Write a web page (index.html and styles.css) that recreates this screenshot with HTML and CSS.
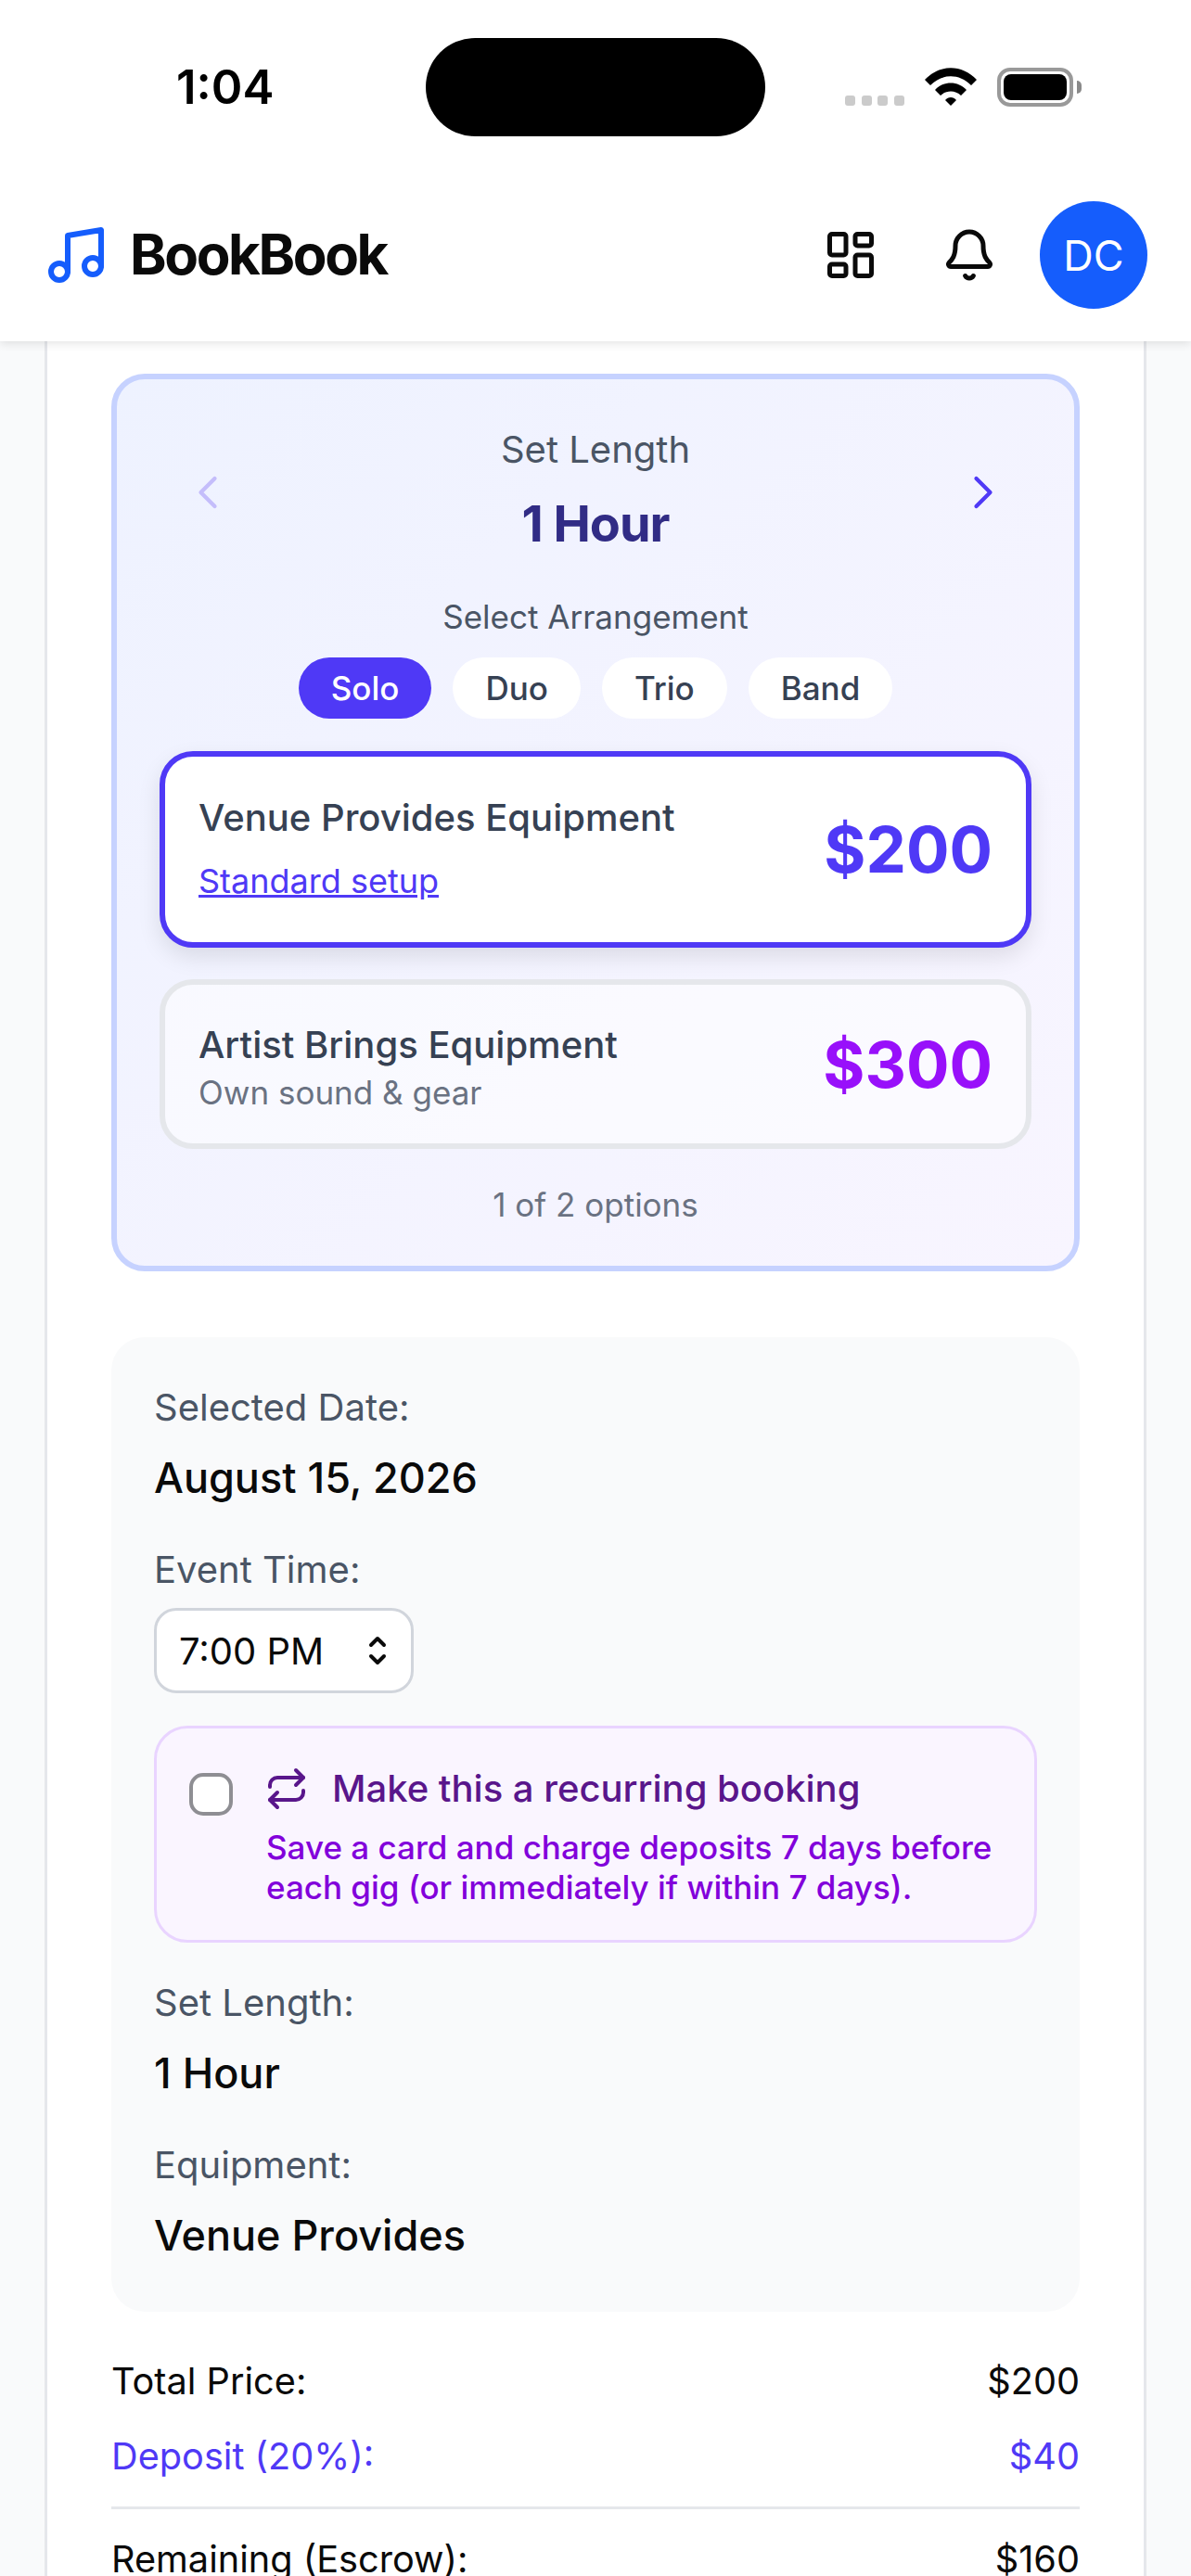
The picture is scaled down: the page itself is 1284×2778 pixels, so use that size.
FILE: index.html
```html
<!DOCTYPE html>
<html lang="en">
<head>
  <meta charset="UTF-8">
  <title>BookBook</title>
  <link rel="stylesheet" href="styles.css">
</head>
<body>

  <div class="top">
    <div class="status">
      <span class="clock">1:04</span>
      <div class="island"></div>
      <div class="status-icons">
        <div class="signal"><i></i><i></i><i></i><i></i></div>
        <svg class="wifi" width="56" height="41" viewBox="0 0 56 41" fill="#000">
          <path d="M0 13C16-4 40-4 56 13L50 19C37 6 19 6 6 19Z"/>
          <path d="M11 24C20 14 36 14 45 24L39 30C33 24 23 24 17 30Z"/>
          <path d="M22 35C25 31 31 31 34 35L28 41Z"/>
        </svg>
        <div class="battery"><div class="battery-fill"></div></div>
        <div class="battery-nub"></div>
      </div>
    </div>

    <header class="header">
      <div class="logo">
        <svg width="72" height="72" viewBox="0 0 24 24" fill="none" stroke="#155dfc" stroke-width="2" stroke-linecap="round" stroke-linejoin="round">
          <path d="M9 18V5l12-2v13"/>
          <circle cx="6" cy="18" r="3"/>
          <circle cx="18" cy="16" r="3"/>
        </svg>
        <span class="logo-text">BookBook</span>
      </div>
      <div class="header-actions">
        <svg class="icon-grid" width="60" height="60" viewBox="0 0 24 24" fill="none" stroke="#0a0a0a" stroke-width="2" stroke-linecap="round" stroke-linejoin="round">
          <rect x="3" y="3" width="7" height="9" rx="1"/>
          <rect x="14" y="3" width="7" height="5" rx="1"/>
          <rect x="14" y="12" width="7" height="9" rx="1"/>
          <rect x="3" y="16" width="7" height="5" rx="1"/>
        </svg>
        <svg class="icon-bell" width="60" height="60" viewBox="0 0 24 24" fill="none" stroke="#0a0a0a" stroke-width="2" stroke-linecap="round" stroke-linejoin="round">
          <path d="M10.268 21a2 2 0 0 0 3.464 0"/>
          <path d="M3.262 15.326A1 1 0 0 0 4 17h16a1 1 0 0 0 .74-1.673C19.41 13.956 18 12.499 18 8A6 6 0 0 0 6 8c0 4.499-1.411 5.956-2.738 7.326"/>
        </svg>
        <div class="avatar">DC</div>
      </div>
    </header>
  </div>

  <main class="page">
    <div class="card">

      <section class="picker">
        <div class="length-row">
          <svg class="chevron chevron-off" width="60" height="60" viewBox="0 0 24 24" fill="none" stroke="currentColor" stroke-width="1.7" stroke-linecap="round" stroke-linejoin="round"><path d="m15 18-6-6 6-6"/></svg>
          <div class="length-text">
            <div class="length-label">Set Length</div>
            <div class="length-value">1 Hour</div>
          </div>
          <svg class="chevron" width="60" height="60" viewBox="0 0 24 24" fill="none" stroke="currentColor" stroke-width="1.7" stroke-linecap="round" stroke-linejoin="round"><path d="m9 18 6-6-6-6"/></svg>
        </div>

        <div class="arrange-label">Select Arrangement</div>
        <div class="pills">
          <span class="pill pill-on">Solo</span>
          <span class="pill">Duo</span>
          <span class="pill">Trio</span>
          <span class="pill">Band</span>
        </div>

        <div class="option option-on">
          <div class="option-info">
            <div class="option-title">Venue Provides Equipment</div>
            <a class="option-link">Standard setup</a>
          </div>
          <div class="price price-indigo">$200</div>
        </div>

        <div class="option option-off">
          <div>
            <div class="option-title">Artist Brings Equipment</div>
            <div class="option-sub">Own sound &amp; gear</div>
          </div>
          <div class="price price-purple">$300</div>
        </div>

        <div class="count">1 of 2 options</div>
      </section>

      <section class="summary">
        <div class="label">Selected Date:</div>
        <div class="value">August 15, 2026</div>

        <div class="label label-time">Event Time:</div>
        <div class="time-select">
          <span>7:00 PM</span>
          <svg width="30" height="42" viewBox="0 0 30 42" fill="none" stroke="#0a0a0a" stroke-width="4" stroke-linecap="round" stroke-linejoin="round">
            <path d="M8 15l7-7 7 7"/>
            <path d="M8 27l7 7 7-7"/>
          </svg>
        </div>

        <div class="recurring">
          <input class="check" type="checkbox">
          <div class="recurring-body">
            <div class="recurring-head">
              <svg width="48" height="48" viewBox="0 0 24 24" fill="none" stroke="#59168b" stroke-width="2" stroke-linecap="round" stroke-linejoin="round">
                <path d="m17 2 4 4-4 4"/>
                <path d="M3 11v-1a4 4 0 0 1 4-4h14"/>
                <path d="m7 22-4-4 4-4"/>
                <path d="M21 13v1a4 4 0 0 1-4 4H3"/>
              </svg>
              <span>Make this a recurring booking</span>
            </div>
            <p class="recurring-note">Save a card and charge deposits 7 days before each gig (or immediately if within 7 days).</p>
          </div>
        </div>

        <div class="label label-length">Set Length:</div>
        <div class="value">1 Hour</div>

        <div class="label label-equip">Equipment:</div>
        <div class="value">Venue Provides</div>
      </section>

      <section class="totals">
        <div class="total-row"><span>Total Price:</span><span>$200</span></div>
        <div class="total-row total-deposit"><span>Deposit (20%):</span><span>$40</span></div>
        <div class="total-row total-rest"><span>Remaining (Escrow):</span><span>$160</span></div>
      </section>

    </div>
  </main>

</body>
</html>
```

FILE: styles.css
```css
* {
  box-sizing: border-box;
}

html, body {
  margin: 0;
  height: 2778px;
  overflow: hidden;
}

body {
  font-family: Inter, "Noto Sans", sans-serif;
  background-color: #f9fafb;
  color: #0a0a0a;
}

/* status bar + header */
.top {
  position: relative;
  z-index: 10;
  background-color: white;
  box-shadow: 0 3px 9px rgba(0,0,0,0.1);
}

.status {
  display: flex;
  align-items: flex-start;
  height: 182px;
  padding: 41px 0 0 190px;
}

.clock {
  width: 269px;
  font-size: 51px;
  font-weight: 600;
  line-height: 106px;
  color: #000;
}

.island {
  width: 366px;
  height: 106px;
  background-color: #000;
  border-radius: 53px;
}

.status-icons {
  display: flex;
  align-items: flex-end;
  height: 42px;
  margin: 32px 0 0 86px;
}

.signal {
  display: flex;
  gap: 6.5px;
  margin-bottom: 1px;
}

.signal i {
  width: 11px;
  height: 11px;
  border-radius: 3px;
  background-color: #cbcbcb;
}

.wifi {
  margin: 0 22px 1px 22px;
}

.battery {
  width: 82px;
  height: 42px;
  padding: 3px;
  border: 4px solid #999;
  border-radius: 14px;
}

.battery-fill {
  height: 100%;
  background-color: #000;
  border-radius: 8px;
}

.battery-nub {
  width: 5px;
  height: 14px;
  margin: 0 0 14px 4px;
  background-color: #8a8a8a;
  border-radius: 0 5px 5px 0;
}

.header {
  display: flex;
  align-items: center;
  justify-content: space-between;
  height: 186px;
  padding: 0 47px 0 46px;
}

.logo {
  display: flex;
  align-items: center;
  gap: 22px;
}

.logo-text {
  font-size: 60px;
  font-weight: 700;
  letter-spacing: -2.4px;
  margin-top: -3px;
}

.header-actions {
  display: flex;
  align-items: center;
}

.icon-bell {
  margin: 0 46px 0 68px;
}

.avatar {
  display: flex;
  align-items: center;
  justify-content: center;
  width: 116px;
  height: 116px;
  border-radius: 50%;
  background-color: #155dfc;
  color: white;
  font-size: 45px;
}

/* page */
.page {
  padding: 0 48px;
}

.card {
  height: 2410px;
  padding: 35px 69px 0;
  background-color: white;
  border-left: 3px solid #e5e7eb;
  border-right: 3px solid #e5e7eb;
}

/* set length picker */
.picker {
  height: 968px;
  padding: 0 46px;
  background: linear-gradient(135deg, #eef2ff, #f8f5ff);
  border: 6px solid #c6d2ff;
  border-radius: 36px;
}

.length-row {
  display: flex;
  align-items: center;
  justify-content: space-between;
  padding: 46px 22px 0;
}

.length-text {
  text-align: center;
}

.length-label {
  font-size: 40px;
  line-height: 60px;
  color: #4a5565;
}

.length-value {
  margin-top: 20px;
  font-size: 54px;
  font-weight: 700;
  line-height: 60px;
  letter-spacing: -1px;
  color: #312c85;
}

.chevron {
  margin-top: 12px;
  color: #4f39f6;
}

.chevron-off {
  color: #c4bdfb;
}

.arrange-label {
  margin-top: 46px;
  font-size: 35px;
  line-height: 48px;
  text-align: center;
  color: #4a5565;
}

.pills {
  display: flex;
  justify-content: center;
  gap: 23px;
  margin-top: 20px;
}

.pill {
  padding: 0 35px;
  font-size: 35px;
  font-weight: 500;
  line-height: 66px;
  background-color: white;
  color: #364153;
  border-radius: 33px;
}

.pill-on {
  background-color: #4f39f6;
  color: white;
}

.option {
  display: flex;
  align-items: center;
  justify-content: space-between;
  padding: 0 36px;
  border: 6px solid #e5e7eb;
  border-radius: 36px;
}

.option-on {
  height: 212px;
  margin-top: 35px;
  background-color: white;
  border-color: #4f39f6;
  box-shadow: 0 10px 24px rgba(0,0,0,0.1);
}

.option-info {
  margin-bottom: 6px;
}

.option-off {
  height: 183px;
  margin-top: 34px;
  background-color: rgba(255,255,255,0.5);
}

.option-title {
  font-size: 40px;
  font-weight: 500;
  line-height: 60px;
  color: #364153;
}

.option-link {
  display: block;
  margin-top: 14px;
  font-size: 36px;
  line-height: 48px;
  text-decoration: underline;
  color: #4f39f6;
}

.option-sub {
  font-size: 35px;
  line-height: 42px;
  color: #6a7282;
}

.price {
  font-size: 69px;
  font-weight: 700;
  line-height: 84px;
}

.price-indigo {
  color: #4f39f6;
}

.price-purple {
  color: #9810fa;
}

.count {
  margin-top: 36px;
  font-size: 35px;
  line-height: 48px;
  text-align: center;
  color: #6a7282;
}

/* summary */
.summary {
  height: 1051px;
  margin-top: 71px;
  padding: 46px 46px 0;
  background-color: #f9fafb;
  border-radius: 36px;
}

.label {
  font-size: 40px;
  line-height: 60px;
  color: #4a5565;
}

.value {
  margin-top: 10px;
  font-size: 45px;
  font-weight: 450;
  line-height: 72px;
}

.label-time {
  margin-top: 33px;
}

.label-length {
  margin-top: 35px;
}

.label-equip {
  margin-top: 33px;
}

.time-select {
  display: flex;
  align-items: center;
  justify-content: space-between;
  width: 280px;
  height: 92px;
  margin-top: 11px;
  padding: 0 21px 0 24px;
  background-color: white;
  border: 3px solid #d1d5dc;
  border-radius: 24px;
  font-size: 40px;
}

.recurring {
  display: flex;
  gap: 34px;
  height: 234px;
  margin-top: 35px;
  padding: 44px 35px 0;
  background-color: #faf5ff;
  border: 3px solid #e9d4ff;
  border-radius: 36px;
}

.check {
  flex: none;
  appearance: none;
  width: 47px;
  height: 46px;
  margin: 4px 0 0;
  background-color: white;
  border: 4.5px solid #8e8e93;
  border-radius: 15px;
}

.recurring-body {
  margin-top: -4px;
}

.recurring-head {
  display: flex;
  align-items: center;
  gap: 25px;
  font-size: 40px;
  font-weight: 500;
  color: #59168b;
}

.recurring-note {
  margin: 18px 0 0 2px;
  font-size: 35px;
  font-weight: 450;
  line-height: 43px;
  color: #8200db;
}

/* totals */
.totals {
  margin-top: 45px;
  font-size: 39.7px;
}

.total-row {
  display: flex;
  justify-content: space-between;
  line-height: 60px;
}

.total-deposit {
  margin-top: 21px;
  padding-bottom: 24px;
  border-bottom: 3px solid #e5e7eb;
  color: #4f39f6;
}

.total-rest {
  margin-top: 24px;
}
```
